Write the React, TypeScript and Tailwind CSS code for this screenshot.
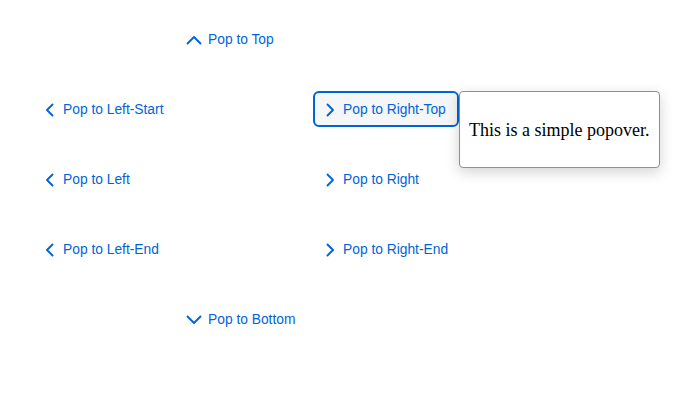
import React from 'react';

type Dir = 'up' | 'down' | 'left' | 'right';

const Chevron = ({ dir }: { dir: Dir }) => {
  const paths: Record<Dir, string> = {
    up: 'M1.5 11.5 L8 5 L14.5 11.5',
    down: 'M1.5 4.5 L8 11 L14.5 4.5',
    left: 'M10.5 2.5 L5 8 L10.5 13.5',
    right: 'M5.5 2.5 L11 8 L5.5 13.5',
  };
  return (
    <svg width="16" height="16" viewBox="0 0 16 16" className="shrink-0 mt-[1px]">
      <path d={paths[dir]} fill="none" stroke="#0064d9" strokeWidth="1.9" strokeLinecap="round" strokeLinejoin="round" />
    </svg>
  );
};

const PopButton = ({ dir, label, focused, gap = 'gap-[5px]' }: { dir: Dir; label: string; focused?: boolean; gap?: string }) => (
  <button
    className={
      'h-9 inline-flex items-center pl-[7px] pr-[11px] rounded-md border-2 text-[13.8px] text-[#0064d9] whitespace-nowrap ' +
      gap +
      (focused ? ' border-[#0064d9] bg-[#f5f6f7]' : ' border-transparent bg-transparent')
    }
    style={{ fontFamily: '"Liberation Sans", Arial, sans-serif' }}
  >
    <Chevron dir={dir} />
    <span className="mt-[2px]">{label}</span>
  </button>
);

export default function App() {
  return (
    <div className="w-[692px] h-[420px] bg-white relative overflow-hidden">
      <div className="grid grid-cols-[140px_140px_auto] gap-y-[34px] pt-[21px] pl-[33px] justify-start items-start">
        <div />
        <div className="ml-[4px]"><PopButton dir="up" label="Pop to Top" gap="gap-[6px]" /></div>
        <div />

        <div><PopButton dir="left" label="Pop to Left-Start" /></div>
        <div />
        <div className="relative w-fit">
          <PopButton dir="right" label="Pop to Right-Top" focused />
          <div className="absolute left-full top-0 w-[201px] h-[77px] bg-white border border-[#8a9096] rounded-[4px] shadow-[0_4px_14px_rgba(0,0,0,0.18)] flex items-center justify-center">
            <span className="text-[18px] text-black mt-[1px]" style={{ fontFamily: '"Liberation Serif", "Times New Roman", serif' }}>
              This is a simple popover.
            </span>
          </div>
        </div>

        <div><PopButton dir="left" label="Pop to Left" /></div>
        <div />
        <div><PopButton dir="right" label="Pop to Right" /></div>

        <div><PopButton dir="left" label="Pop to Left-End" /></div>
        <div />
        <div><PopButton dir="right" label="Pop to Right-End" /></div>

        <div />
        <div className="ml-[4px]"><PopButton dir="down" label="Pop to Bottom" gap="gap-[6px]" /></div>
        <div />
      </div>
    </div>
  );
}
